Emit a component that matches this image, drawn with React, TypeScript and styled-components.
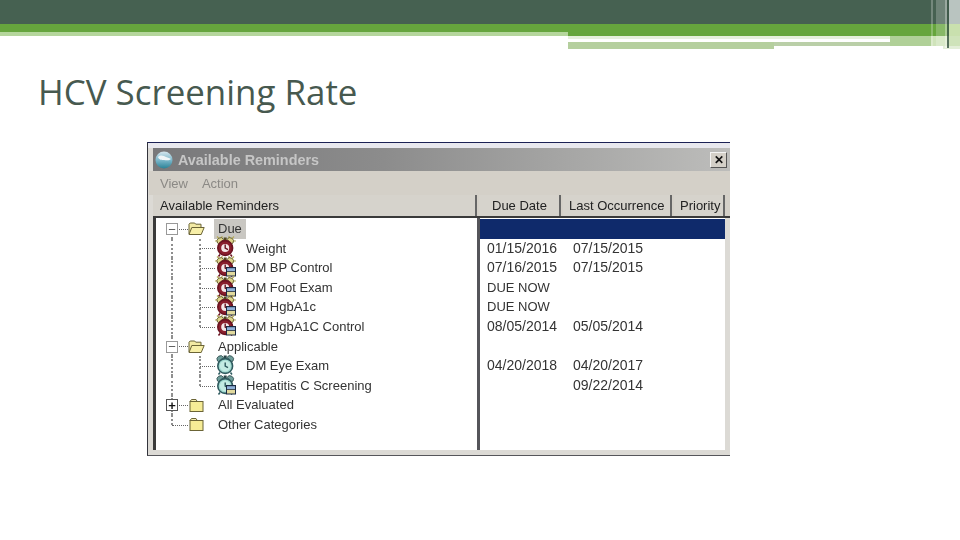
import React from 'react'
import styled, { createGlobalStyle } from 'styled-components'

const GlobalStyle = createGlobalStyle`
html, body {
  margin: 0;
  padding: 0;
  background: #fff;
}
`

interface Reminder {
  label: string
  level: 0 | 1
  icon: 'open' | 'closed' | 'red' | 'redNote' | 'tealClock' | 'tealNote'
  expander?: 'minus' | 'plus'
  selected?: boolean
  last?: boolean
  due?: string
  occurrence?: string
}

const reminders: Reminder[] = [
  { label: 'Due', level: 0, icon: 'open', expander: 'minus', selected: true },
  { label: 'Weight', level: 1, icon: 'red', due: '01/15/2016', occurrence: '07/15/2015' },
  { label: 'DM BP Control', level: 1, icon: 'redNote', due: '07/16/2015', occurrence: '07/15/2015' },
  { label: 'DM Foot Exam', level: 1, icon: 'redNote', due: 'DUE NOW' },
  { label: 'DM HgbA1c', level: 1, icon: 'redNote', due: 'DUE NOW' },
  { label: 'DM HgbA1C Control', level: 1, icon: 'redNote', last: true, due: '08/05/2014', occurrence: '05/05/2014' },
  { label: 'Applicable', level: 0, icon: 'open', expander: 'minus' },
  { label: 'DM Eye Exam', level: 1, icon: 'tealClock', due: '04/20/2018', occurrence: '04/20/2017' },
  { label: 'Hepatitis C Screening', level: 1, icon: 'tealNote', last: true, occurrence: '09/22/2014' },
  { label: 'All Evaluated', level: 0, icon: 'closed', expander: 'plus' },
  { label: 'Other Categories', level: 0, icon: 'closed', last: true }
]

const Clock = ({ teal, note }: { teal?: boolean, note?: boolean }) => {
  const ring = teal ? '#2f5a5e' : '#6a1320'
  const face = teal ? '#9fd8cf' : '#8a1f2d'
  const outline = teal ? '#2a4648' : '#4f4a20'
  return (
    <ClockSvg width='21' height='21' viewBox='0 0 21 21'>
      {!teal && <path d='M2 0.5l2.5 2.5M7 0v2.5M14 0v2.5M19 0.5l-2.5 2.5M0 5h3M21 5h-3' stroke='#b5ab5c' strokeWidth='1.2' />}
      <path d='M2.5 7a3.4 3.4 0 0 1 6-3.6L4 8zM18 7a3.4 3.4 0 0 0-6-3.6L16.500 8z' fill={teal ? '#6f9d9a' : '#ded58c'} stroke={outline} strokeWidth='0.8' />
      <rect x='8.7' y='1.500' width='3' height='2.500' fill={outline} />
      <circle cx='10.200' cy='12' r='7.400' fill={face} stroke={ring} strokeWidth='1.600' />
      <circle cx='10.200' cy='12' r={teal ? 5.400 : 4} fill={teal ? '#c3ebe3' : '#f4e8e8'} />
      <path d='M10.200 8.500V12l2.800 1.600' stroke={ring} strokeWidth='1.400' fill='none' />
      <path d='M5 18.500l-1.500 2M15.500 18.500l1.500 2' stroke={ring} strokeWidth='1.500' />
      {note && (
        <g>
          <rect x='11' y='11' width='10' height='9.500' fill='#1c2a42' />
          <rect x='12' y='12.200' width='8' height='2.800' fill='#8fb0d8' />
          <rect x='12' y='15.800' width='8' height='3.700' fill='#e2da9e' />
        </g>
      )}
    </ClockSvg>
  )
}

const Folder = ({ open }: { open?: boolean }) => (
  <svg width='17' height='15' viewBox='0 0 17 15'>
    {open ? (
      <>
        <path d='M1 13V3.200L2.200 2h4.500l1 1.200h5.300V6' fill='#f3eaa4' stroke='#6b6436' strokeWidth='1' />
        <path d='M1 13.500L3.800 6.500h12.400l-3 7z' fill='#f7efa8' stroke='#6b6436' strokeWidth='1' />
      </>
    ) : (
      <>
        <path d='M2 3.500L3.500 1.500h4.500l1.200 2' fill='#f5eeb0' stroke='#6b6436' strokeWidth='1' />
        <rect x='2' y='3.500' width='13' height='10' fill='#f6ec96' stroke='#6b6436' strokeWidth='1' />
      </>
    )}
  </svg>
)

const Globe = () => (
  <svg width='18' height='18' viewBox='0 0 18 18'>
    <defs>
      <linearGradient id='globe' x1='0' y1='0' x2='0' y2='1'>
        <stop offset='0' stopColor='#d5e6ee' />
        <stop offset='0.5' stopColor='#7db8cb' />
        <stop offset='1' stopColor='#2a8297' />
      </linearGradient>
    </defs>
    <circle cx='9' cy='9' r='8.500' fill='url(#globe)' />
    <path d='M3 6c3-3 6-1 8 0s4 1 5 2c-2 2-5 1-7 1S4 9 3 6z' fill='#f0f6f8' />
  </svg>
)

const RowIcon = ({ icon }: { icon: Reminder['icon'] }) => {
  if (icon === 'open') return <Folder open />
  if (icon === 'closed') return <Folder />
  if (icon === 'red') return <Clock />
  if (icon === 'redNote') return <Clock note />
  if (icon === 'tealClock') return <Clock teal />
  return <Clock teal note />
}

const HeaderOrnament = () => (
  <Ornament width='392' height='50' viewBox='568 0 392 50'>
    <rect x='568' y='32' width='392' height='4' fill='#66a53d' />
    <rect x='568' y='36' width='322' height='3' fill='#e6efdc' />
    <rect x='568' y='42' width='206' height='7' fill='#b5cf9e' />
    <rect x='774' y='42' width='116' height='4' fill='#bacfa8' />
    <rect x='890' y='36' width='41' height='10' fill='#b0d098' />
    <rect x='931' y='36' width='29' height='10' fill='#cfe3ba' />
    <rect x='943' y='46' width='17' height='3' fill='#e3eed8' />
    <rect x='931' y='0' width='2' height='46' fill='#fff' opacity='0.25' />
    <rect x='936' y='0' width='9' height='46' fill='#fff' opacity='0.22' />
    <rect x='945' y='0' width='2' height='48' fill='#fff' opacity='0.45' />
    <rect x='947' y='0' width='2' height='48' fill='#3f5a4a' opacity='0.85' />
    <rect x='949' y='0' width='11' height='24' fill='#b9c4c0' />
    <rect x='949' y='24' width='11' height='12' fill='#c9e0ae' />
  </Ornament>
)

const App = () => (
  <Slide>
    <GlobalStyle />
    <Header>
      <DarkBand />
      <GreenBand />
      <PaleBand />
      <HeaderOrnament />
    </Header>
    <Title>HCV Screening Rate</Title>
    <Window>
      <TitleBar>
        <Globe />
        <TitleText>Available Reminders</TitleText>
        <CloseButton>✕</CloseButton>
      </TitleBar>
      <MenuBar>
        <MenuItem>View</MenuItem>
        <MenuItem>Action</MenuItem>
      </MenuBar>
      <ColumnHeaders>
        <ColumnHeader $width={324} $pad={7}>Available Reminders</ColumnHeader>
        <ColumnHeader $width={82} $pad={13}>Due Date</ColumnHeader>
        <ColumnHeader $width={109} $pad={6}>Last Occurrence</ColumnHeader>
        <ColumnHeader $width={51} $pad={6}>Priority</ColumnHeader>
      </ColumnHeaders>
      <Panels>
        <TreePanel>
          {reminders.map(item => (
            <TreeRow key={item.label}>
              {item.level === 0 ? (
                <Gutter $width={32} $line={16} $toTop={item.label !== 'Due'} $toBottom={!item.last} $branch>
                  {item.expander && <Expander $plus={item.expander === 'plus'}>{item.expander === 'minus' ? '−' : '+'}</Expander>}
                </Gutter>
              ) : (
                <>
                  <Gutter $width={32} $line={16} $toTop $toBottom />
                  <Gutter $width={27} $line={12} $toTop $toBottom={!item.last} $branch />
                </>
              )}
              <IconSlot $width={item.level === 0 ? 17 : 21}><RowIcon icon={item.icon} /></IconSlot>
              <RowLabel $level={item.level} $selected={item.selected}>{item.label}</RowLabel>
            </TreeRow>
          ))}
        </TreePanel>
        <DuePanel>
          {reminders.map(item => (
            <DueRow key={item.label} $selected={item.selected}>
              <DueCell $now={item.due === 'DUE NOW'}>{item.due}</DueCell>
              <DueCell>{item.occurrence}</DueCell>
            </DueRow>
          ))}
        </DuePanel>
      </Panels>
    </Window>
  </Slide>
)

const Slide = styled.div`
position: relative;
width: 960px;
height: 540px;
overflow: hidden;
background: #fff;
`

const Header = styled.header`
position: relative;
height: 36px;
`

const DarkBand = styled.div`
height: 24px;
background: #466151;
`

const GreenBand = styled.div`
height: 8px;
background: #66a53d;
`

const PaleBand = styled.div`
height: 4px;
background: #b5d69c;
`

const Ornament = styled.svg`
position: absolute;
top: 0;
right: 0;
`

const Title = styled.h1`
margin: 36px 0 30px 38px;
font-family: "Open Sans", sans-serif;
font-weight: 400;
font-size: 34.9px;
line-height: 40px;
color: #47594f;
`

const Window = styled.div`
box-sizing: border-box;
width: 583px;
height: 314px;
margin-left: 147px;
padding: 5px 0 5px 1px;
display: flex;
flex-direction: column;
background: linear-gradient(#e8e8ee 5px, #dcdad5 5px);
border-top: 1px solid #1b2155;
border-left: 1px solid #33343c;
border-bottom: 1px solid #55555a;
filter: blur(0.35px);
font-family: "Liberation Sans", sans-serif;
font-size: 13px;
color: #333;
`

const TitleBar = styled.div`
height: 23px;
margin-left: 4px;
padding: 0 3px 0 2px;
flex: none;
display: flex;
align-items: center;
background: linear-gradient(90deg, #78787a 0%, #8c8c8c 40%, #bdbdbb 100%);
`

const TitleText = styled.span`
margin-left: 5px;
flex: 1;
font-weight: 700;
font-size: 14.4px;
color: #c6c6c6;
`

const CloseButton = styled.span`
width: 17px;
height: 16px;
display: flex;
align-items: center;
justify-content: center;
font-size: 12px;
font-weight: 700;
color: #111;
background: #d4d0c8;
border: 1px solid;
border-color: #f4f4f4 #555 #555 #f4f4f4;
box-sizing: border-box;
`

const MenuBar = styled.div`
height: 24px;
padding-left: 11px;
flex: none;
display: flex;
align-items: center;
gap: 14px;
background: #d4d0c8;
`

const MenuItem = styled.span`
font-size: 13px;
color: #8b8985;
`

const ColumnHeaders = styled.div`
height: 21px;
margin-left: 4px;
flex: none;
display: flex;
background: #d4d0c8;
border-bottom: 2px solid #3a3a3a;
`

const ColumnHeader = styled.div<{ $width: number, $pad: number }>`
box-sizing: border-box;
width: ${props => props.$width}px;
padding-left: ${props => props.$pad}px;
margin-right: 2px;
line-height: 21px;
font-size: 13px;
color: #222;
background: #d6d3cc;
border-right: 2px solid #666;
white-space: nowrap;
`

const Panels = styled.div`
flex: 1;
min-height: 0;
margin: 0 5px 0 4px;
display: flex;
background: #fff;
border-left: 3px solid #3a3a3a;
`

const TreePanel = styled.div`
width: 321px;
padding-top: 1px;
flex: none;
border-right: 3px solid #55555a;
`

const TreeRow = styled.div`
height: 19.6px;
display: flex;
align-items: center;
`

const Gutter = styled.span<{ $width: number, $line: number, $toTop?: boolean, $toBottom?: boolean, $branch?: boolean }>`
position: relative;
align-self: stretch;
flex: none;
width: ${props => props.$width}px;
&::before {
  content: '';
  position: absolute;
  left: ${props => props.$line - 1}px;
  top: ${props => props.$toTop ? '0' : '50%'};
  bottom: ${props => props.$toBottom ? '0' : '50%'};
  border-left: 2px dotted #8f8f8f;
}
&::after {
  content: '';
  display: ${props => props.$branch ? 'block' : 'none'};
  position: absolute;
  left: ${props => props.$line}px;
  right: 0;
  top: 50%;
  border-top: 1px dotted #666;
}
`

const Expander = styled.span<{ $plus?: boolean }>`
position: absolute;
z-index: 1;
left: 10px;
top: 4px;
box-sizing: border-box;
width: 12px;
height: 12px;
display: flex;
align-items: center;
justify-content: center;
font-size: 13px;
font-weight: ${props => props.$plus ? 700 : 400};
line-height: 1;
color: ${props => props.$plus ? '#111' : '#555'};
background: #fff;
border: 1px solid ${props => props.$plus ? '#555' : '#999'};
`

const IconSlot = styled.span<{ $width: number }>`
width: ${props => props.$width}px;
flex: none;
display: flex;
align-items: center;
justify-content: center;
`

const ClockSvg = styled.svg`
margin-top: -3px;
`

const RowLabel = styled.span<{ $level: number, $selected?: boolean }>`
margin-left: ${props => props.$level === 0 ? 9 : 6}px;
padding: 0 4px;
line-height: 19.6px;
white-space: nowrap;
background: ${props => props.$selected ? '#c9c7c2' : 'transparent'};
`

const DuePanel = styled.div`
flex: 1;
padding-top: 1px;
`

const DueRow = styled.div<{ $selected?: boolean }>`
height: 19.6px;
padding-left: 7px;
display: flex;
line-height: 19.6px;
background: ${props => props.$selected ? '#0f2a6b' : 'transparent'};
`

const DueCell = styled.span<{ $now?: boolean }>`
width: 86px;
flex: none;
font-size: ${props => props.$now ? 13 : 14}px;
white-space: nowrap;
`

export default App
